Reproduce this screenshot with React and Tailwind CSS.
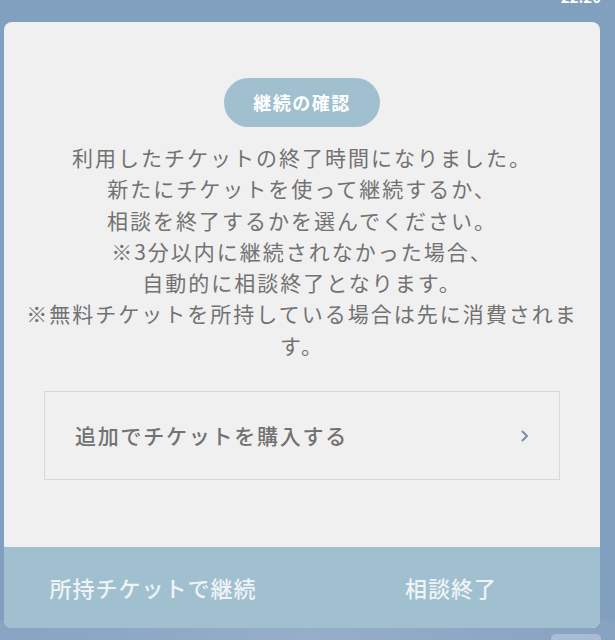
import React from "react";

export default function App() {
  return (
    <div
      className="relative w-[615px] h-[640px] overflow-hidden bg-[#819fbf]"
      style={{ fontFamily: '"Noto Sans CJK JP", "Noto Sans", sans-serif' }}
    >
      <div className="absolute right-[14px] top-[-14px] text-white text-[15px] font-bold">22:20</div>
      <div className="absolute right-[14px] bottom-[-14px] w-[50px] h-[20px] rounded-[5px] bg-[#eef2f6]"></div>
      <div className="absolute left-0 bottom-0 w-[615px] h-[20px] bg-gradient-to-r from-[#8aa6c4] via-[#9fb4cc] to-[#8aa3c2] opacity-70"></div>
      <div className="pt-[22px] pl-[4px] relative">
        <div className="w-[596px] h-[606px] rounded-[8px] overflow-hidden bg-[#f0f0f0] flex flex-col">
          <div className="flex-1 flex flex-col items-center pt-[56px] px-[20px]">
            <div className="h-[49px] w-[156px] rounded-full bg-[#a0c0d0] flex items-center justify-center text-white text-[18px] font-bold tracking-[1.5px]">
              継続の確認
            </div>
            <div className="mt-[15px] text-center text-[#727272] text-[21px] leading-[31.3px] tracking-[2px] w-[562px]">
              <p>利用したチケットの終了時間になりました。</p>
              <p>新たにチケットを使って継続するか、</p>
              <p>相談を終了するかを選んでください。</p>
              <p>※3分以内に継続されなかった場合、</p>
              <p>自動的に相談終了となります。</p>
              <p>※無料チケットを所持している場合は先に消費されます。</p>
            </div>
            <div className="mt-[30px] w-[516px] h-[89px] border border-[#d8d8d8] flex items-center justify-between pl-[30px] pr-[30px]">
              <span className="text-[#727272] text-[21px] tracking-[1.75px] font-medium">追加でチケットを購入する</span>
              <svg width="8" height="12" viewBox="0 0 8 12" fill="none">
                <path d="M1.5 1.5 L6 6 L1.5 10.5" stroke="#7d8ca6" strokeWidth="2" strokeLinecap="round" strokeLinejoin="round" />
              </svg>
            </div>
          </div>
          <div className="h-[81px] bg-[#a0c0d0] grid grid-cols-2 text-[#eef3f6] text-[22px] font-medium tracking-[1px]">
            <div className="flex items-center justify-center">所持チケットで継続</div>
            <div className="flex items-center justify-center">相談終了</div>
          </div>
        </div>
      </div>
    </div>
  );
}
